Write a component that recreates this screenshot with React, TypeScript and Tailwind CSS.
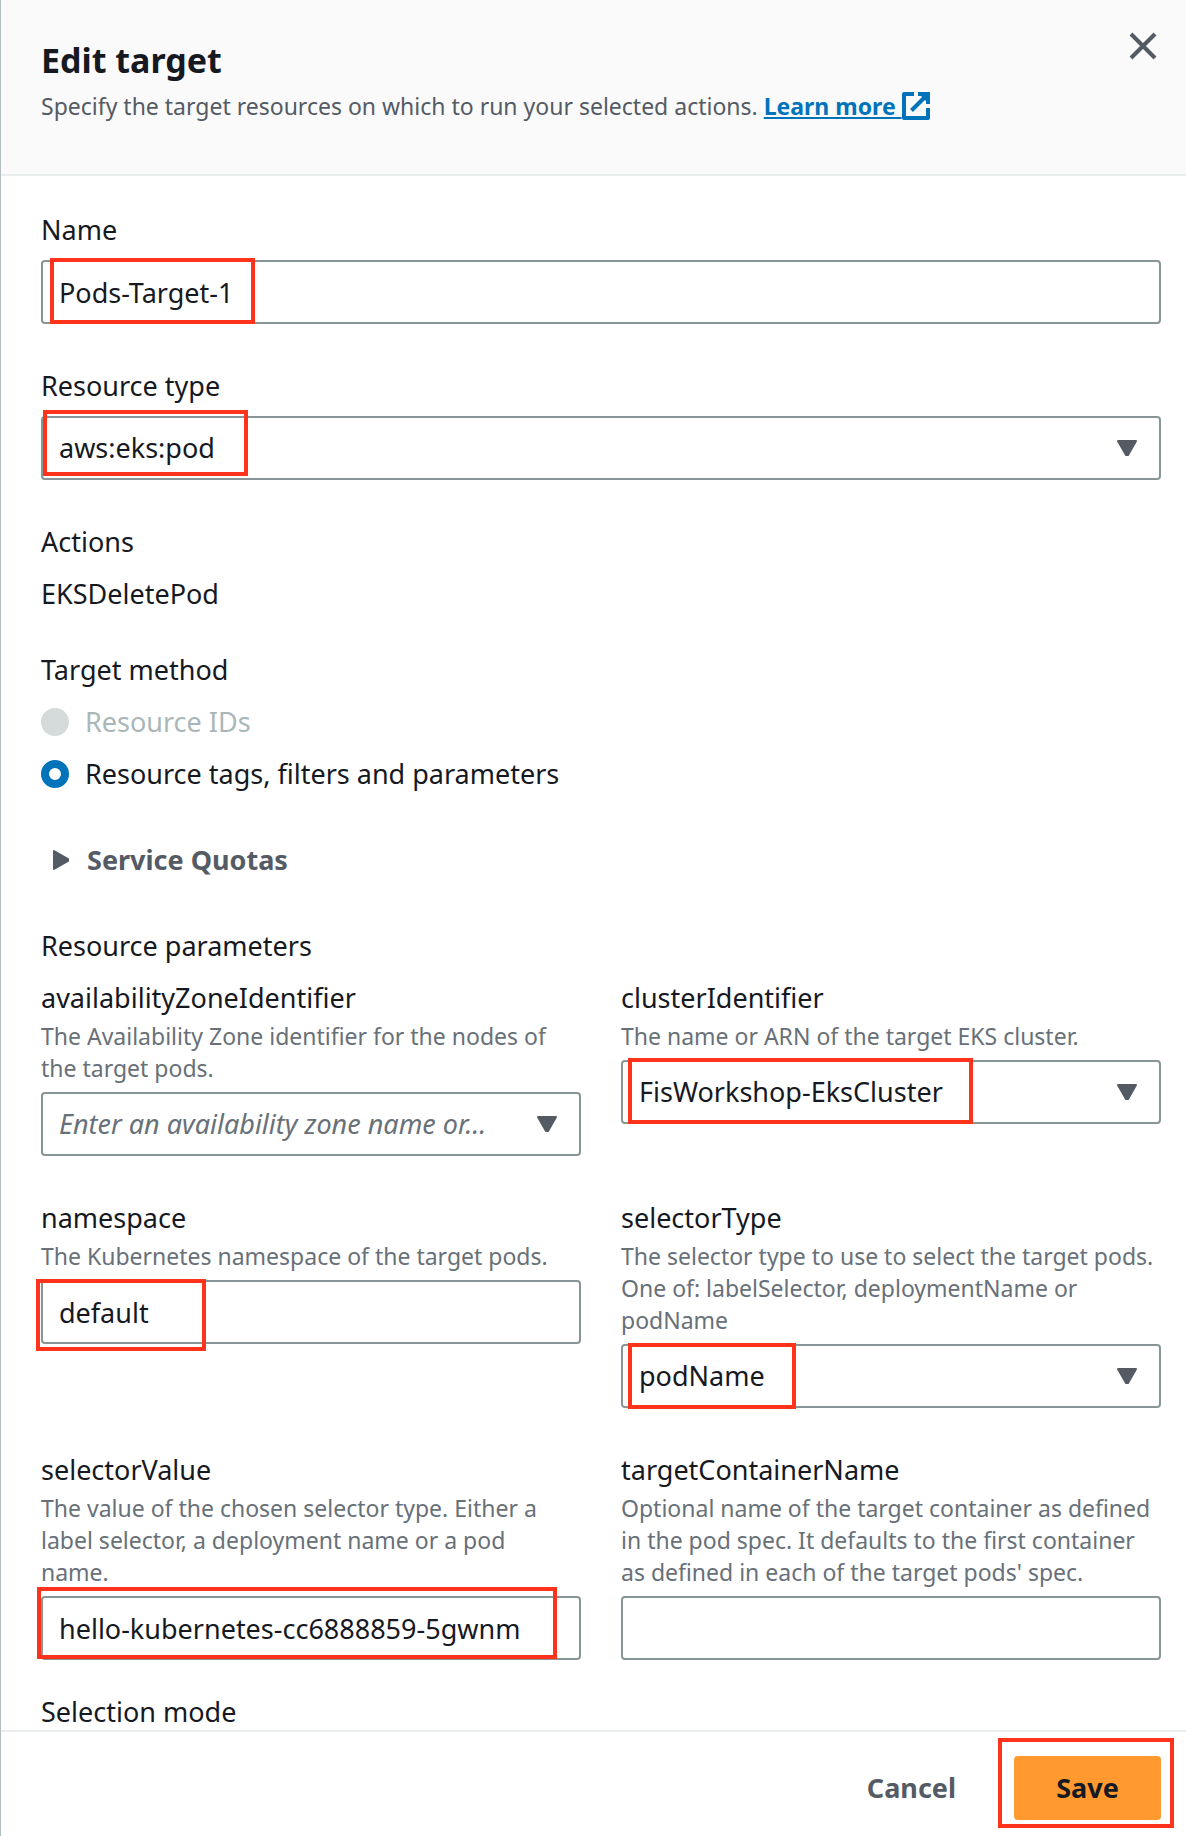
import { useState, type ReactNode } from 'react';

const controlClass =
  'block h-16 w-full appearance-none rounded-[4px] border-2 border-[#879596] bg-white pl-4 text-[27px] text-[#16191f] outline-none focus:border-[#00a1c9]';

function Highlight({ className }: { className: string }) {
  return (
    <span
      aria-hidden="true"
      className={`pointer-events-none absolute border-4 border-[#ff321b] ${className}`}
    />
  );
}

type FieldProps = {
  id: string;
  label: string;
  description?: string;
  children: ReactNode;
};

function Field({ id, label, description, children }: FieldProps) {
  return (
    <div>
      <label htmlFor={id} className="block text-[27px] leading-11">
        {label}
      </label>
      {description && (
        <p
          id={`${id}-description`}
          className="text-[23px] leading-8 whitespace-pre-line text-[#687078]"
        >
          {description}
        </p>
      )}
      <div className="relative mt-2">{children}</div>
    </div>
  );
}

function TextInput({ id, initial = '' }: { id: string; initial?: string }) {
  const [value, setValue] = useState(initial);
  return (
    <input
      id={id}
      type="text"
      value={value}
      onChange={(e) => setValue(e.target.value)}
      className={`${controlClass} pr-4`}
    />
  );
}

type SelectProps = { id: string; options: string[]; placeholder?: string };

function Select({ id, options, placeholder }: SelectProps) {
  const [value, setValue] = useState(placeholder ? '' : options[0]);
  return (
    <>
      <select
        id={id}
        value={value}
        onChange={(e) => setValue(e.target.value)}
        className={`${controlClass} pr-14 text-ellipsis ${value === '' ? 'text-[#687078]! italic' : ''}`}
      >
        {placeholder && <option value="">{placeholder}</option>}
        {options.map((option) => (
          <option key={option} value={option}>
            {option}
          </option>
        ))}
      </select>
      <svg
        aria-hidden="true"
        viewBox="0 0 20 16"
        className="pointer-events-none absolute top-6 right-6 h-4 w-5 fill-[#545b64] stroke-[#545b64]"
        strokeWidth="2"
        strokeLinejoin="round"
      >
        <path d="M1 1H19L11 15H9Z" />
      </svg>
    </>
  );
}

function ExternalIcon() {
  return (
    <svg
      aria-hidden="true"
      viewBox="0 0 28 28"
      className="inline-block h-7 w-7 align-[-5px]"
      fill="none"
      stroke="currentColor"
      strokeWidth="4"
    >
      <path d="M12 2H2V26H26V16" strokeLinejoin="round" />
      <path d="M16 2H26V12" />
      <path d="M26 2L9.500 18.500" />
      <path d="M18 3H25V10Z" fill="currentColor" stroke="none" />
    </svg>
  );
}

const methods = [
  { id: 'ids', label: 'Resource IDs', disabled: true },
  { id: 'filters', label: 'Resource tags, filters and parameters', disabled: false },
];

export default function App() {
  const [method, setMethod] = useState('filters');
  return (
    <div className="flex h-screen flex-col border-l border-[#b4bdc0] bg-white font-['Noto_Sans',sans-serif] text-[#16191f]">
      <header className="flex shrink-0 items-start justify-between border-b-2 border-[#eaeded] bg-[#fafafa] pt-9.5 pr-[25px] pb-13 pl-10">
        <div className="flex flex-col gap-2">
          <h1 className="text-[34px] leading-11 font-bold">Edit target</h1>
          <p className="text-[23px] leading-8 text-[#545b64]">
            Specify the target resources on which to run your selected actions.{' '}
            <a href="#learn-more" className="font-bold text-[#0073bb]">
              <span className="underline decoration-2 underline-offset-2">Learn more </span>
              <ExternalIcon />
            </a>
          </p>
        </div>
        <button
          type="button"
          aria-label="Close"
          className="-mt-3.5 flex h-11 w-9 shrink-0 items-center justify-center text-[#545b64]"
        >
          <svg viewBox="0 0 28 28" className="h-7 w-7" stroke="currentColor" strokeWidth="4">
            <path d="M2 2L26 26M26 2L2 26" />
          </svg>
        </button>
      </header>

      <main className="flex min-h-0 flex-1 flex-col overflow-y-auto px-10 pt-8 pr-[25px] [scrollbar-width:none]">
        <div className="flex flex-col gap-10">
          <Field id="name" label="Name">
            <TextInput id="name" initial="Pods-Target-1" />
            <Highlight className="-top-0.5 left-[9px] h-[66px] w-[205px]" />
          </Field>

          <Field id="resource-type" label="Resource type">
            <Select id="resource-type" options={['aws:eks:pod']} />
            <Highlight className="-top-1.5 left-0.5 h-[66px] w-[205px]" />
          </Field>
        </div>

        <section className="mt-10 flex flex-col gap-2 text-[27px] leading-11">
          <h2>Actions</h2>
          <p>EKSDeletePod</p>
        </section>

        <fieldset className="mt-8 text-[27px] leading-11">
          <legend>Target method</legend>
          <div className="mt-2 flex flex-col gap-2">
            {methods.map((m) => (
              <label
                key={m.id}
                className={`flex items-center gap-4 ${m.disabled ? 'text-[#aab7b8]' : ''}`}
              >
                <input
                  type="radio"
                  name="method"
                  disabled={m.disabled}
                  checked={method === m.id}
                  onChange={() => setMethod(m.id)}
                  className="h-7 w-7 shrink-0 appearance-none rounded-full border-2 border-[#879596] bg-white checked:border-8 checked:border-[#0073bb] disabled:border-[#d5dbdb] disabled:bg-[#d5dbdb]"
                />
                {m.label}
              </label>
            ))}
          </div>
        </fieldset>

        <button
          type="button"
          aria-expanded="false"
          className="mt-10 flex h-12 shrink-0 items-center gap-4.5 self-start pl-3 text-[27px] leading-11 font-bold text-[#545b64]"
        >
          <svg
            aria-hidden="true"
            viewBox="0 0 16 20"
            className="h-5 w-4 fill-current stroke-current"
            strokeWidth="2"
            strokeLinejoin="round"
          >
            <path d="M1 1L15 9V11L1 19Z" />
          </svg>
          Service Quotas
        </button>

        <section className="mt-10">
          <h2 className="text-[27px] leading-11">Resource parameters</h2>
          <div className="mt-2 grid grid-cols-2 gap-10">
            <Field
              id="availability-zone"
              label="availabilityZoneIdentifier"
              description="The Availability Zone identifier for the nodes of the target pods."
            >
              <Select
                id="availability-zone"
                options={[]}
                placeholder="Enter an availability zone name or…"
              />
            </Field>
            <Field
              id="cluster"
              label="clusterIdentifier"
              description="The name or ARN of the target EKS cluster."
            >
              <Select id="cluster" options={['FisWorkshop-EksCluster']} />
              <Highlight className="-top-0.5 left-[7px] h-[66px] w-[345px]" />
            </Field>
            <Field
              id="namespace"
              label="namespace"
              description="The Kubernetes namespace of the target pods."
            >
              <TextInput id="namespace" initial="default" />
              <Highlight className="-top-px -left-[5px] h-[72px] w-[170px]" />
            </Field>
            <Field
              id="selector-type"
              label="selectorType"
              description="The selector type to use to select the target pods. One of: labelSelector, deploymentName or podName"
            >
              <Select id="selector-type" options={['podName', 'labelSelector', 'deploymentName']} />
              <Highlight className="-top-px left-[7px] h-[66px] w-[168px]" />
            </Field>
            <Field
              id="selector-value"
              label="selectorValue"
              description={
                'The value of the chosen selector type. Either a label selector, a deployment name or a pod\nname.'
              }
            >
              <TextInput id="selector-value" initial="hello-kubernetes-cc6888859-5gwnm" />
              <Highlight className="-top-[9px] -left-1 h-[72px] w-[520px]" />
            </Field>
            <Field
              id="container-name"
              label="targetContainerName"
              description="Optional name of the target container as defined in the pod spec. It defaults to the first container as defined in each of the target pods' spec."
            >
              <TextInput id="container-name" />
            </Field>
          </div>
        </section>

        <h2 className="mt-8.5 text-[27px] leading-9">Selection mode</h2>
      </main>

      <footer className="flex shrink-0 justify-end gap-4 border-t-2 border-[#eaeded] bg-white pt-6 pr-[25px] pb-4 text-[27px] font-bold">
        <button type="button" className="h-16 px-[42px] text-[#545b64]">
          Cancel
        </button>
        <div className="relative">
          <button type="button" className="h-16 w-[147px] rounded-[4px] bg-[#ff9930]">
            Save
          </button>
          <Highlight className="-top-[18px] -left-4 h-[90px] w-[176px]" />
        </div>
      </footer>
    </div>
  );
}
